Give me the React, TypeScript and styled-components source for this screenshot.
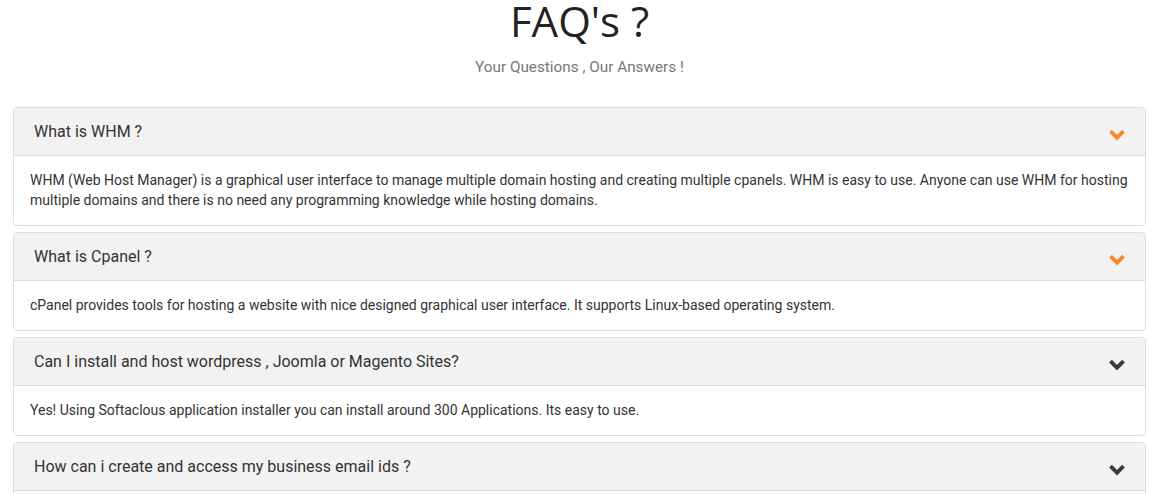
import React from "react";
import styled, { createGlobalStyle } from "styled-components";

const GlobalStyle = createGlobalStyle`
  html, body {
    margin: 0;
    padding: 0;
    background: #ffffff;
    overflow: hidden;
  }
  body {
    font-family: Roboto, "Liberation Sans", Arial, sans-serif;
  }
`;

const Page = styled.div`
  padding: 0 4px 0 13px;
`;

const Heading = styled.header`
  display: flex;
  flex-direction: column;
  align-items: center;
  margin-bottom: 30px;
`;

const Title = styled.h1`
  margin: 0;
  font-family: "Open Sans", "Liberation Sans", sans-serif;
  font-weight: 400;
  font-size: 42px;
  line-height: 42px;
  color: #222;
`;

const Subtitle = styled.p`
  margin: 15px 0 0;
  font-family: Roboto, "Liberation Sans", sans-serif;
  font-size: 15.3px;
  line-height: 20px;
  color: #777;
`;

const List = styled.div`
  display: flex;
  flex-direction: column;
  gap: 6px;
`;

const Card = styled.section`
  border: 1px solid #dddddd;
  border-radius: 4px;
  overflow: hidden;
  background: #fff;
`;

const Header = styled.div`
  display: flex;
  align-items: center;
  justify-content: space-between;
  padding: 13px 20px;
  background: #f2f2f2;
  border-bottom: 1px solid #dddddd;
`;

const Question = styled.h3`
  margin: 0;
  font-family: Roboto, "Liberation Sans", sans-serif;
  font-weight: 400;
  font-size: 16px;
  line-height: 21px;
  color: #333;
`;

const Body = styled.div`
  padding: 14px 16px 15px;
  font-family: Roboto, "Liberation Sans", sans-serif;
  font-size: 14px;
  line-height: 20px;
  color: #333;
`;

const Chevron = styled.svg<{ $active?: boolean }>`
  width: 18px;
  height: 11px;
  margin-top: 6px;
  margin-right: -1px;
  flex: none;
  color: ${(p) => (p.$active ? "#f7892a" : "#3a3a3a")};
`;

const ChevronIcon = ({ active }: { active?: boolean }) => (
  <Chevron $active={active} viewBox="0 0 18 11" overflow="visible">
    <polyline
      points="2.5,2.2 9,8.7 15.5,2.2"
      fill="none"
      stroke="currentColor"
      strokeWidth="3.8"
      strokeLinecap="butt"
      strokeLinejoin="miter"
    />
  </Chevron>
);

const faqs = [
  {
    q: "What is WHM ?",
    a: "WHM (Web Host Manager) is a graphical user interface to manage multiple domain hosting and creating multiple cpanels. WHM is easy to use. Anyone can use WHM for hosting multiple domains and there is no need any programming knowledge while hosting domains.",
    active: true,
  },
  {
    q: "What is Cpanel ?",
    a: "cPanel provides tools for hosting a website with nice designed graphical user interface. It supports Linux-based operating system.",
    active: true,
  },
  {
    q: "Can I install and host wordpress , Joomla or Magento Sites?",
    a: "Yes! Using Softaclous application installer you can install around 300 Applications. Its easy to use.",
    active: false,
  },
  {
    q: "How can i create and access my business email ids ?",
    a: "You can create and access your business email ids from cPanel using webmail.",
    active: false,
  },
];

export default function App() {
  return (
    <Page>
      <GlobalStyle />
      <Heading>
        <Title>FAQ's ?</Title>
        <Subtitle>Your Questions , Our Answers !</Subtitle>
      </Heading>
      <List>
        {faqs.map((f) => (
          <Card key={f.q}>
            <Header>
              <Question>{f.q}</Question>
              <ChevronIcon active={f.active} />
            </Header>
            <Body>{f.a}</Body>
          </Card>
        ))}
      </List>
    </Page>
  );
}
